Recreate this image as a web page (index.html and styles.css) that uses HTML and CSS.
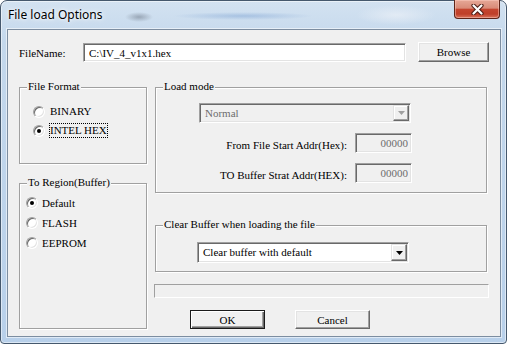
FILE: index.html
```html
<!DOCTYPE html>
<html lang="en">
<head>
    <meta charset="UTF-8">
    <meta name="viewport" content="width=device-width, initial-scale=1.0">
    <title>File load Options</title>
    <link rel="stylesheet" href="styles.css">
</head>
<body>

<div class="window">
    <div class="titlebar">
        <span class="title">File load Options</span>
        <div class="close">
            <svg width="13" height="11" viewBox="0 0 13 11">
                <path d="M2.5 1.5 L10.5 9.5 M10.5 1.5 L2.5 9.5" stroke="#4b1c14" stroke-width="4.2" stroke-linecap="round"/>
                <path d="M2.5 1.5 L10.5 9.5 M10.5 1.5 L2.5 9.5" stroke="#fff" stroke-width="2.2" stroke-linecap="round"/>
            </svg>
        </div>
    </div>

    <div class="client">
        <div class="file-row">
            <label class="file-label" for="filename">FileName:</label>
            <input class="textbox file-input" type="text" id="filename" value="C:\IV_4_v1x1.hex">
            <button class="button browse" type="button">Browse</button>
        </div>

        <div class="main">
            <div class="col-left">
                <div class="group format">
                    <span class="group-title">File Format</span>
                    <div class="radio-row"><span class="radio"></span>BINARY</div>
                    <div class="radio-row"><span class="radio checked"></span><span class="focus">INTEL HEX</span></div>
                </div>
                <div class="group region">
                    <span class="group-title">To Region(Buffer)</span>
                    <div class="radio-row"><span class="radio checked"></span>Default</div>
                    <div class="radio-row"><span class="radio"></span>FLASH</div>
                    <div class="radio-row"><span class="radio"></span>EEPROM</div>
                </div>
            </div>

            <div class="col-right">
                <div class="group load">
                    <span class="group-title">Load mode</span>
                    <div class="combo disabled">
                        <span class="combo-text">Normal</span>
                        <span class="combo-btn">
                            <svg width="7" height="4" viewBox="0 0 7 4"><polygon points="0,0 7,0 3.5,4" fill="#a0a0a0"/></svg>
                        </span>
                    </div>
                    <div class="addr-row">
                        <span class="addr-label">From File Start Addr(Hex):</span>
                        <input class="textbox addr" type="text" value="00000" disabled>
                    </div>
                    <div class="addr-row">
                        <span class="addr-label">TO Buffer Strat Addr(HEX):</span>
                        <input class="textbox addr" type="text" value="00000" disabled>
                    </div>
                </div>

                <div class="group clear">
                    <span class="group-title">Clear Buffer when loading the file</span>
                    <div class="combo tall">
                        <span class="combo-text">Clear buffer with default</span>
                        <span class="combo-btn">
                            <svg width="7" height="4" viewBox="0 0 7 4"><polygon points="0,0 7,0 3.5,4" fill="#000"/></svg>
                        </span>
                    </div>
                </div>

                <div class="status"></div>

                <div class="actions">
                    <button class="button default" type="button">OK</button>
                    <button class="button" type="button">Cancel</button>
                </div>
            </div>
        </div>
    </div>
</div>

</body>
</html>
```

FILE: styles.css
```css
* {
    box-sizing: border-box;
}
body {
    margin: 0;
    font-family: "Liberation Serif", "Times New Roman", serif;
    font-size: 11px;
    color: #000;
    background: #fff;
}
.window {
    width: 507px;
    height: 344px;
    display: flex;
    flex-direction: column;
    padding: 0 5px 6px 6px;
    border: 1px solid #45586d;
    border-radius: 7px 7px 4px 4px;
    /* verre flou de la barre de titre */
    background:
        radial-gradient(ellipse 14px 5px at 138px 16px, rgba(90, 100, 115, 0.45), transparent),
        radial-gradient(ellipse 70px 4px at 242px 15px, rgba(95, 140, 200, 0.35), transparent),
        radial-gradient(ellipse 40px 10px at 395px 14px, rgba(235, 240, 247, 0.7), transparent),
        linear-gradient(#d3e2f1, #c4d8ec 40px, #b8d0ea);
    box-shadow: inset 0 0 0 1px rgba(255, 255, 255, 0.5);
}
.titlebar {
    height: 28px;
    display: flex;
    justify-content: space-between;
    align-items: flex-start;
}
.title {
    font-family: "Noto Sans", sans-serif;
    font-size: 12px;
    line-height: 16px;
    padding: 6px 0 0 1px;
    text-shadow: 0 0 6px #fff, 0 0 3px #fff;
}
.close {
    width: 46px;
    height: 19px;
    margin: -1px 1px 0 0;
    display: flex;
    align-items: center;
    justify-content: center;
    border: 1px solid #5e2419;
    border-top: none;
    border-radius: 0 0 4px 4px;
    background: linear-gradient(#e6a897 0%, #d98b78 45%, #c4452f 52%, #bf3f29 78%, #d9735c 100%);
    box-shadow: inset 0 0 0 1px rgba(255, 210, 200, 0.45);
}
.client {
    flex: 1;
    background: #f0f0f0;
    border: 1px solid #7c8da0;
    box-shadow: 0 0 0 1px rgba(255, 255, 255, 0.55);
    padding: 12px 0 0 11px;
}

/* controles */
.textbox {
    font: inherit;
    color: #000;
    background: #fff;
    border: 1px solid;
    border-color: #a0a0a0 #fff #fff #a0a0a0;
    box-shadow: inset 1px 1px 0 #696969, inset -1px -1px 0 #e3e3e3;
    padding: 0 4px 0 5px;
    outline: none;
}
.button {
    font: inherit;
    color: #000;
    background: #f0f0f0;
    border: 1px solid;
    border-color: #fff #696969 #696969 #fff;
    box-shadow: inset -1px -1px 0 #a0a0a0, inset 1px 1px 0 #e3e3e3;
    padding: 0;
    width: 75px;
    height: 19px;
}
.button.default {
    border: 1px solid #1a1a1a;
    box-shadow: inset 1px 1px 0 #fff, inset -1px -1px 0 #696969, inset -2px -2px 0 #a0a0a0;
}

.file-row {
    display: flex;
    align-items: flex-start;
    height: 20px;
}
.file-label {
    width: 64px;
    line-height: 13px;
    padding-top: 5px;
}
.file-input {
    width: 323px;
    height: 19px;
    margin: 1px 12px 0 0;
}
.browse {
    width: 71px;
    height: 20px;
}

.main {
    display: grid;
    grid-template-columns: 128px 332px;
    column-gap: 8px;
    margin-top: 25px;
}
.col-left, .col-right {
    display: flex;
    flex-direction: column;
}

.group {
    position: relative;
    border: 1px solid #a0a0a0;
    box-shadow: 1px 1px 0 #fff, inset 1px 1px 0 #fff;
}
.group-title {
    position: absolute;
    top: -8px;
    left: 7px;
    padding: 0 1px;
    line-height: 13px;
    background: #f0f0f0;
    white-space: nowrap;
}

.radio-row {
    display: flex;
    align-items: center;
    line-height: 13px;
}
.radio {
    position: relative;
    flex: none;
    width: 12px;
    height: 12px;
    border-radius: 50%;
    background: #fff;
    border: 1px solid;
    border-color: #a0a0a0 #fff #fff #a0a0a0;
    box-shadow: inset 1px 1px 0 #696969, inset -1px -1px 0 #e3e3e3;
}
.radio.checked::after {
    content: "";
    position: absolute;
    left: 3px;
    top: 3px;
    width: 4px;
    height: 4px;
    border-radius: 50%;
    background: #000;
}
.focus {
    border: 1px dotted #000;
    margin-left: -1px;
}

.format {
    height: 77px;
    padding: 14px 0 0 13px;
}
.format .radio-row {
    height: 19px;
    gap: 5px;
}
.region {
    height: 146px;
    margin-top: 19px;
    padding: 9px 0 0 6px;
}
.region .radio-row {
    height: 20px;
    gap: 4px;
}

.load {
    height: 106px;
    padding: 15px 74px 0 43px;
}
.combo {
    width: 212px;
    height: 20px;
    display: flex;
    align-items: stretch;
    justify-content: space-between;
    padding: 1px;
    background: #fff;
    border: 1px solid;
    border-color: #a0a0a0 #fff #fff #a0a0a0;
    box-shadow: inset 1px 1px 0 #696969, inset -1px -1px 0 #e3e3e3;
}
.combo.tall {
    height: 21px;
}
.combo.disabled {
    background: #f0f0f0;
    color: #6d6d6d;
}
.combo-text {
    padding-left: 4px;
    line-height: 16px;
}
.combo-btn {
    width: 16px;
    display: flex;
    align-items: center;
    justify-content: center;
    background: #f0f0f0;
    border: 1px solid;
    border-color: #e3e3e3 #696969 #696969 #e3e3e3;
    box-shadow: inset -1px -1px 0 #a0a0a0, inset 1px 1px 0 #fff;
}
.addr-row {
    display: flex;
    justify-content: flex-end;
    align-items: flex-start;
    gap: 8px;
    margin-top: 10px;
}
.addr-label {
    line-height: 13px;
    padding-top: 6px;
}
.addr {
    width: 57px;
    height: 20px;
    text-align: right;
    padding-right: 3px;
    background: #f0f0f0;
    color: #6d6d6d;
}

.clear {
    height: 47px;
    margin-top: 32px;
    padding: 16px 0 0 41px;
}
.status {
    width: 335px;
    height: 14px;
    margin: 12px 0 0 -1px;
    border: 1px solid;
    border-color: #a0a0a0 #fff #fff #a0a0a0;
}
.actions {
    display: flex;
    gap: 30px;
    padding-left: 35px;
    margin-top: 12px;
}
```
